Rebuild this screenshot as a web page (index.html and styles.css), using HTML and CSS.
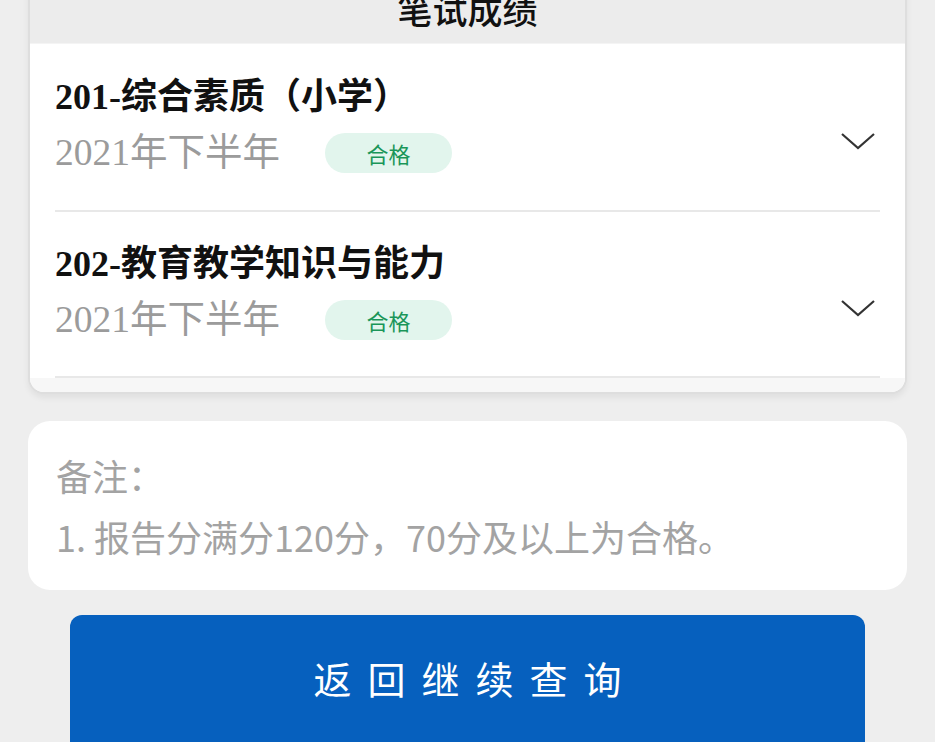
FILE: index.html
```html
<!DOCTYPE html>
<html lang="zh-CN">
<head>
    <meta charset="UTF-8">
    <meta name="viewport" content="width=device-width, initial-scale=1.0">
    <title>笔试成绩</title>
    <link rel="stylesheet" href="styles.css">
</head>
<body>
    <div class="page">
        <!-- 成绩卡片 -->
        <div class="card score-card">
            <div class="card-header">笔试成绩</div>

            <div class="score-item">
                <div class="score-info">
                    <div class="score-title">201-综合素质（小学）</div>
                    <div class="score-meta">
                        <span class="score-term">2021年下半年</span>
                        <span class="badge">合格</span>
                    </div>
                </div>
                <svg class="chevron" width="36" height="20" viewBox="0 0 36 20">
                    <polyline points="2,3 18,17 34,3" fill="none" stroke="#333" stroke-width="2.2"/>
                </svg>
            </div>

            <div class="score-item">
                <div class="score-info">
                    <div class="score-title">202-教育教学知识与能力</div>
                    <div class="score-meta">
                        <span class="score-term">2021年下半年</span>
                        <span class="badge">合格</span>
                    </div>
                </div>
                <svg class="chevron" width="36" height="20" viewBox="0 0 36 20">
                    <polyline points="2,3 18,17 34,3" fill="none" stroke="#333" stroke-width="2.2"/>
                </svg>
            </div>

            <div class="card-footer"></div>
        </div>

        <!-- 备注 -->
        <div class="card note-card">
            <p>备注：</p>
            <p>1. 报告分满分120分，70分及以上为合格。</p>
        </div>

        <button class="back-btn">返回继续查询</button>
    </div>
</body>
</html>
```

FILE: styles.css
```css
* {
    margin: 0;
    padding: 0;
    box-sizing: border-box;
}

body {
    background: #eeeeee;
    font-family: "Noto Sans CJK SC", "Noto Sans", sans-serif;
    overflow: hidden;
}

.page {
    margin-top: -26px;
    padding: 0 28px;
    display: flex;
    flex-direction: column;
}

.card {
    background: #ffffff;
    border-radius: 16px;
}

/* 成绩卡片 */
.score-card {
    border: 2px solid #dedede;
    border-top: none;
    overflow: hidden;
    box-shadow: 0 4px 6px rgba(0,0,0,0.06);
}

.card-header {
    height: 70px;
    background: #ececec;
    border-bottom: 1px solid #f4f4f4;
    text-align: center;
    font-size: 35px;
    font-weight: 500;
    line-height: 70px;
    color: #111;
}

.score-item {
    margin: 0 25px;
    padding: 33px 0 37px;
    border-bottom: 2px solid #e8e8e8;
    display: flex;
    align-items: center;
}

.score-item + .score-item {
    padding-top: 32px;
    padding-bottom: 36px;
}

.score-info {
    flex: 1;
}

.score-title {
    font-family: "Liberation Serif", "Noto Sans CJK SC", serif;
    font-size: 36px;
    font-weight: bold;
    line-height: 40px;
    color: #111;
}

.score-meta {
    margin-top: 16px;
    display: flex;
    align-items: center;
    height: 40px;
}

.score-term {
    font-family: "Liberation Serif", "Noto Sans CJK SC", serif;
    font-size: 37.5px;
    color: #9b9b9b;
    line-height: 40px;
}

.badge {
    margin-left: 45px;
    width: 127px;
    height: 40px;
    border-radius: 20px;
    background: #e2f5ed;
    color: #1a9659;
    font-size: 22px;
    line-height: 40px;
    text-align: center;
}

.chevron {
    margin-top: 32px;
    margin-right: 4px;
}

.card-footer {
    height: 14px;
    background: #f7f7f7;
}

/* 备注 */
.note-card {
    margin-top: 27px;
    padding: 34px 28px 34px;
    border-radius: 22px;
}

.note-card p {
    font-size: 36px;
    line-height: 40px;
    color: #a3a3a3;
}

.note-card p + p {
    margin-top: 21px;
}

.back-btn {
    margin: 25px 42px 0;
    height: 140px;
    border: none;
    border-radius: 12px;
    background: #0660be;
    color: #ffffff;
    font-family: "Noto Sans CJK SC", sans-serif;
    font-size: 38px;
    letter-spacing: 16px;
    text-indent: 16px;
    padding-bottom: 16px;
    cursor: pointer;
}
```
